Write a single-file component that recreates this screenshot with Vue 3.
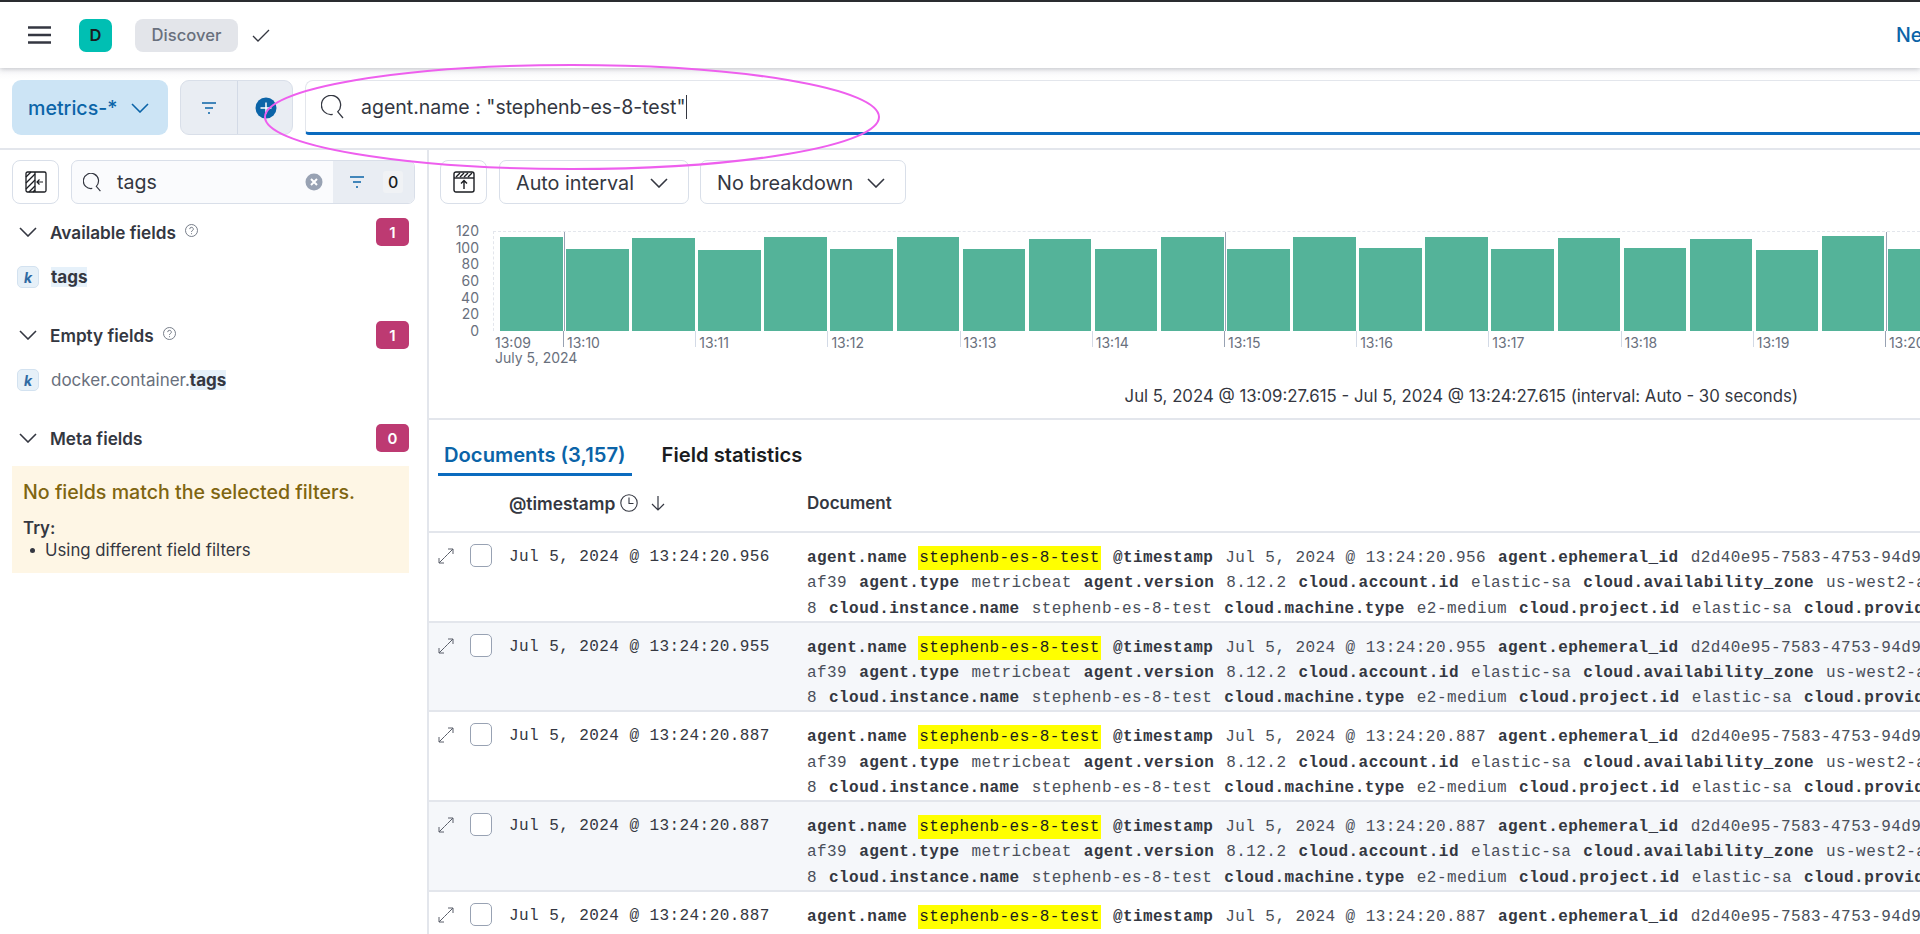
<script setup>
const heights = [94,82,93,81,94,82,94,82,92,82,94,82,94,83,94,82,93,83,92,81,95,82]
const yLabels = ['120','100','80','60','40','20','0']
const ticks = [
  { t: '13:10', major: true }, { t: '13:11' }, { t: '13:12' }, { t: '13:13' }, { t: '13:14' },
  { t: '13:15', major: true }, { t: '13:16' }, { t: '13:17' }, { t: '13:18' }, { t: '13:19' },
  { t: '13:20', major: true }
]
const majors = [70, 731, 1392]
const times = ['956', '955', '887', '887', '887']
const rows = times.map((ms, i) => {
  const ts = `Jul 5, 2024 @ 13:24:20.${ms}`
  return {
    ts,
    alt: i % 2 === 1,
    lines: [
      [['agent.name', 'stephenb-es-8-test', true], ['@timestamp', ts], ['agent.ephemeral_id', 'd2d40e95-7583-4753-94d9']],
      [[null, 'af39'], ['agent.type', 'metricbeat'], ['agent.version', '8.12.2'], ['cloud.account.id', 'elastic-sa'], ['cloud.availability_zone', 'us-west2-a']],
      [[null, '8'], ['cloud.instance.name', 'stephenb-es-8-test'], ['cloud.machine.type', 'e2-medium'], ['cloud.project.id', 'elastic-sa'], ['cloud.provider', 'gcp']]
    ]
  }
})
</script>

<template>
  <div class="page">
    <header class="top">
      <svg class="burger" width="23" height="18" viewBox="0 0 23 18"><path d="M0 1.5h23M0 9h23M0 16.5h23" stroke="#343741" stroke-width="2.6" /></svg>
      <div class="space">D</div>
      <div class="crumb">Discover</div>
      <svg class="check" width="18" height="13" viewBox="0 0 18 13"><path d="M1 7l5 5L17 1" fill="none" stroke="#343741" stroke-width="1.3" /></svg>
      <div class="grow"></div>
      <div class="new">New</div>
    </header>

    <div class="querybar">
      <button class="view">
        <span>metrics-*</span>
        <svg width="18" height="10" viewBox="0 0 18 10"><path d="M1 1l8 8 8-8" fill="none" stroke="#0b64a8" stroke-width="1.6" /></svg>
      </button>
      <div class="fgroup">
        <div class="fcell">
          <svg width="16" height="12" viewBox="0 0 16 12"><path d="M1 1h14M4 6h8M7 11h2" stroke="#0b64a8" stroke-width="1.5" /></svg>
        </div>
        <div class="fcell right">
          <svg width="22" height="22" viewBox="0 0 22 22"><circle cx="11" cy="11" r="10.5" fill="#0b64a8" /><path d="M11 5.5v11M5.5 11h11" stroke="#fff" stroke-width="1.5" /></svg>
        </div>
      </div>
      <div class="query">
        <svg width="24" height="24" viewBox="0 0 24 24"><path d="M11.7 19.45A9.6 9.6 0 1 1 16.8 16.8L22 23" fill="none" stroke="#343741" stroke-width="1.3" /></svg>
        <span class="qtext">agent.name : "stephenb-es-8-test"<i class="caret"></i></span>
      </div>
    </div>

    <div class="body">
      <aside class="side">
        <div class="side-top">
          <button class="iconbtn">
            <svg width="22" height="22" viewBox="0 0 22 22">
              <rect x="1" y="1" width="20" height="20" rx="1.5" fill="none" stroke="#1a1c21" stroke-width="1.3" />
              <path d="M1 6l5-5M1 12L10 3M1 18L10 9M4 21l6-6M8 21l2-2" stroke="#1a1c21" stroke-width="1.3" />
              <path d="M10 1v20" stroke="#1a1c21" stroke-width="1.3" />
              <path d="M18 11h-6M14.5 8.5L12 11l2.5 2.5" fill="none" stroke="#1a1c21" stroke-width="1.2" />
            </svg>
          </button>
          <div class="fsearch">
            <svg class="fsi" width="19" height="19" viewBox="0 0 24 24"><path d="M11.7 19.45A9.6 9.6 0 1 1 16.8 16.8L22 23" fill="none" stroke="#343741" stroke-width="1.5" /></svg>
            <span class="ftext">tags</span>
            <svg class="clear" width="18" height="18" viewBox="0 0 18 18"><circle cx="9" cy="9" r="8.5" fill="#98a2b3" /><path d="M6 6l6 6M12 6l-6 6" stroke="#fff" stroke-width="2" /></svg>
            <div class="fcount">
              <svg width="16" height="12" viewBox="0 0 16 12"><path d="M1 1h14M4 6h8M7 11h2" stroke="#0b64a8" stroke-width="1.5" /></svg>
              <span class="zero">0</span>
            </div>
          </div>
        </div>

        <div class="shead first">
          <svg class="chev" width="18" height="10" viewBox="0 0 18 10"><path d="M1 1l8 8 8-8" fill="none" stroke="#343741" stroke-width="1.6" /></svg>
          <span class="stitle">Available fields</span>
          <svg class="help" width="13" height="13" viewBox="0 0 13 13"><circle cx="6.5" cy="6.5" r="6" fill="none" stroke="#69707d" stroke-width=".9" /><path d="M4.7 5.1a1.8 1.8 0 1 1 2.6 1.6c-.6.3-.8.6-.8 1.3M6.5 9.2v1" fill="none" stroke="#69707d" stroke-width=".9" /></svg>
          <span class="badge">1</span>
        </div>
        <div class="frow">
          <span class="ktype">k</span>
          <span class="fname"><mark class="hl">tags</mark></span>
        </div>

        <div class="shead">
          <svg class="chev" width="18" height="10" viewBox="0 0 18 10"><path d="M1 1l8 8 8-8" fill="none" stroke="#343741" stroke-width="1.6" /></svg>
          <span class="stitle">Empty fields</span>
          <svg class="help" width="13" height="13" viewBox="0 0 13 13"><circle cx="6.5" cy="6.5" r="6" fill="none" stroke="#69707d" stroke-width=".9" /><path d="M4.7 5.1a1.8 1.8 0 1 1 2.6 1.6c-.6.3-.8.6-.8 1.3M6.5 9.2v1" fill="none" stroke="#69707d" stroke-width=".9" /></svg>
          <span class="badge">1</span>
        </div>
        <div class="frow">
          <span class="ktype">k</span>
          <span class="fname muted">docker.container.<mark class="hl">tags</mark></span>
        </div>

        <div class="shead">
          <svg class="chev" width="18" height="10" viewBox="0 0 18 10"><path d="M1 1l8 8 8-8" fill="none" stroke="#343741" stroke-width="1.6" /></svg>
          <span class="stitle">Meta fields</span>
          <span class="badge">0</span>
        </div>

        <div class="callout">
          <div class="ctitle">No fields match the selected filters.</div>
          <div class="ctry">Try:</div>
          <div class="cli"><span class="dot"></span>Using different field filters</div>
        </div>
      </aside>

      <main class="main">
        <div class="chart-top">
          <button class="iconbtn">
            <svg width="22" height="22" viewBox="0 0 22 22">
              <rect x="1" y="1" width="20" height="20" rx="2" fill="none" stroke="#1a1c21" stroke-width="1.4" />
              <path d="M1 7h20" stroke="#1a1c21" stroke-width="1.4" />
              <path d="M3 6l4-4M7 6l4-4M11 6l4-4M15 6l4-4" stroke="#1a1c21" stroke-width="1.4" />
              <path d="M11 18v-8M8 12.5L11 9.5l3 3" fill="none" stroke="#1a1c21" stroke-width="1.4" />
            </svg>
          </button>
          <button class="select s1">Auto interval
            <svg width="18" height="10" viewBox="0 0 18 10"><path d="M1 1l8 8 8-8" fill="none" stroke="#343741" stroke-width="1.6" /></svg>
          </button>
          <button class="select s2">No breakdown
            <svg width="18" height="10" viewBox="0 0 18 10"><path d="M1 1l8 8 8-8" fill="none" stroke="#343741" stroke-width="1.6" /></svg>
          </button>
        </div>

        <div class="chart">
          <div class="ylabels">
            <span v-for="l in yLabels" :key="l">{{ l }}</span>
          </div>
          <div class="plotcol">
            <div class="plot">
              <div v-for="(h, i) in heights" :key="i" class="bar" :style="{ height: h + 'px' }"></div>
              <i v-for="m in majors" :key="m" class="majorline" :style="{ left: m + 'px' }"></i>
            </div>
            <div class="axis">
              <div class="tick first"><span>13:09</span><span>July 5, 2024</span></div>
              <div v-for="t in ticks" :key="t.t" class="tick" :class="{ major: t.major }"><span>{{ t.t }}</span></div>
            </div>
          </div>
        </div>
        <div class="caption">Jul 5, 2024 @ 13:09:27.615 - Jul 5, 2024 @ 13:24:27.615 (interval: Auto - 30 seconds)</div>

        <div class="tabs">
          <div class="tab active">Documents (3,157)</div>
          <div class="tab">Field statistics</div>
        </div>

        <div class="thead">
          <div class="th-ts">@timestamp
            <svg class="clock" width="18" height="18" viewBox="0 0 18 18"><circle cx="9" cy="9" r="8.2" fill="none" stroke="#343741" stroke-width="1.1" /><path d="M9 3.5V9.5h4.5" fill="none" stroke="#343741" stroke-width="1.1" /></svg>
            <svg class="arrow" width="14" height="16" viewBox="0 0 14 16"><path d="M7 1v14M1 9l6 6 6-6" fill="none" stroke="#343741" stroke-width="1.2" /></svg>
          </div>
          <div class="th-doc">Document</div>
        </div>

        <div class="rows">
          <div v-for="(r, i) in rows" :key="i" class="row" :class="{ alt: r.alt }">
            <svg class="expand" width="16" height="16" viewBox="0 0 16 16"><path d="M10 1h5v5M15 1L9.5 6.5M6.5 9.5L1 15M1 10v5h5" fill="none" stroke="#5a5f6a" stroke-width="1" /><path d="M9.5 6.5l-3 3" stroke="#5a5f6a" stroke-width="1" /></svg>
            <span class="cb"></span>
            <div class="ts">{{ r.ts }}</div>
            <div class="doc">
              <div v-for="(ln, j) in r.lines" :key="j" class="ln">
                <template v-for="(p, k) in ln" :key="k">
                  <b v-if="p[0]">{{ p[0] }}</b>
                  <span :class="{ yel: p[2] }">{{ p[1] }}</span>
                </template>
              </div>
            </div>
          </div>
        </div>
      </main>
    </div>

    <svg class="annot" width="640" height="120" viewBox="0 0 640 120"><ellipse cx="320" cy="60" rx="307" ry="52" fill="none" stroke="#ee5fee" stroke-width="2" /></svg>
  </div>
</template>

<style>
html, body { margin: 0; background: #fff; overflow: hidden; }
</style>

<style scoped>
* { box-sizing: border-box; }
button { font-family: inherit; background: none; margin: 0; cursor: pointer; }
.page {
  position: relative;
  width: 1920px;
  height: 934px;
  overflow: hidden;
  display: flex;
  flex-direction: column;
  font-family: Inter, "Liberation Sans", sans-serif;
  color: #343741;
}
.top {
  height: 68px;
  flex: none;
  display: flex;
  align-items: center;
  background: #fff;
  border-top: 2px solid #2a2c30;
  box-shadow: 0 1px 5px rgba(60, 66, 80, .3);
  position: relative;
  z-index: 2;
  padding-left: 28px;
}
.burger { margin-right: 28px; }
.space {
  width: 33px; height: 33px; border-radius: 7px; background: #00bfb3;
  display: flex; align-items: center; justify-content: center;
  font-size: 16.5px; font-weight: 600; color: #1a1c21; margin-right: 23px;
}
.crumb {
  width: 103px; height: 33px; border-radius: 8px; background: #e3e5ea;
  color: #69707d; font-size: 16.6px; font-weight: 500;
  display: flex; align-items: center; justify-content: center; margin-right: 14px;
}
.grow { flex: 1; }
.new { color: #0b64a8; font-size: 19.6px; font-weight: 500; width: 24px; white-space: nowrap; overflow: visible; }
.querybar {
  height: 82px; flex: none; display: flex; align-items: flex-start;
  padding: 12px 0 0 12px; border-bottom: 2px solid #e3e6ec; background: linear-gradient(#f8f8fa, #fff 12px);
}
.view {
  width: 156px; height: 55px; border: 0; border-radius: 9px; background: #cce4f5;
  color: #0b64a8; font-size: 19.6px; font-weight: 500;
  display: flex; align-items: center; gap: 14px; padding-left: 16px;
}
.fgroup {
  width: 113px; height: 55px; margin-left: 12px; display: flex;
  background: #e9edf3; border: 1px solid #d9dfe9; border-radius: 9px;
}
.fcell { flex: 0 0 56px; display: flex; align-items: center; justify-content: center; }
.fcell.right { border-left: 1px solid #d3dae6; }
.query {
  flex: 1; height: 55px; margin-left: 12px; background: #fff; display: flex; align-items: center;
  border: 1px solid #e3e6ec; border-right: 0; border-bottom: 3px solid #0b6bbf; border-radius: 8px 0 0 4px;
  padding-left: 15px;
}
.qtext { margin-left: 16px; font-size: 19.5px; color: #343741; position: relative; display: inline-flex; align-items: center; }
.caret { width: 1px; height: 24px; background: #343741; margin-left: 1px; }
.body { flex: 1; display: flex; min-height: 0; }
.side { width: 429px; flex: none; border-right: 2px solid #e3e6ec; padding: 10px 0 0 12px; }
.side-top { display: flex; gap: 12px; width: 403px; }
.iconbtn {
  width: 47px; height: 44px; border: 1px solid #d9dfe9; border-radius: 8px; background: #fff;
  display: flex; align-items: center; justify-content: center; padding: 0; flex: none;
}
.fsearch {
  flex: 1; height: 44px; background: #fafbfd; border: 1px solid #d9dfe9; border-radius: 7px;
  display: flex; align-items: center; padding-left: 11px; overflow: hidden;
}
.ftext { font-size: 19.6px; margin-left: 15px; flex: 1; }
.clear { margin-right: 10px; }
.fcount {
  width: 81px; height: 100%; background: #e9edf3; display: flex; align-items: center;
  padding-left: 16px; gap: 18px;
}
.zero { background: #f0f2f5; font-size: 16px; font-weight: 500; color: #1a1c21; padding: 1px 5px; border-radius: 3px; }
.shead { width: 397px; height: 28px; display: flex; align-items: center; margin-top: 33px; padding-left: 7px; }
.shead.first { margin-top: 14px; }
.chev { margin-right: 13px; flex: none; }
.stitle { font-size: 17.2px; font-weight: 600; color: #343741; }
.help { margin-left: 9px; margin-top: -3px; }
.badge {
  margin-left: auto; width: 33px; height: 28px; background: #bd3a72; color: #fff; border-radius: 5px;
  display: flex; align-items: center; justify-content: center; font-size: 15px; font-weight: 600;
}
.frow { display: flex; align-items: center; height: 22px; margin-top: 20px; padding-left: 5px; }
.ktype {
  width: 22px; height: 22px; border-radius: 5px; background: #e6f0f8; border: 1px solid #d3e2f0;
  color: #2f6aa3; font-style: italic; font-weight: 700; font-size: 14px;
  display: flex; align-items: center; justify-content: center; margin-right: 12px; flex: none;
}
.fname { font-size: 17px; color: #343741; }
.fname.muted { color: #69707d; }
.hl { background: #e6f1fa; color: #343741; font-weight: 700; }
.callout {
  width: 397px; height: 107px; margin-top: 14px; background: #fef6e5; padding: 14px 11px 0;
}
.ctitle { font-size: 19.6px; font-weight: 500; color: #7f6510; line-height: 24px; white-space: nowrap; }
.ctry { font-size: 16.8px; font-weight: 600; color: #343741; margin-top: 14px; line-height: 20px; }
.cli { font-size: 16.8px; color: #343741; line-height: 22px; margin-top: 1px; padding-left: 7px; display: flex; align-items: center; }
.dot { width: 5px; height: 5px; border-radius: 50%; background: #343741; margin-right: 10px; }
.main { flex: 1; min-width: 0; display: flex; flex-direction: column; }
.chart-top { display: flex; flex: none; gap: 12px; padding: 10px 0 0 11px; }
.select {
  height: 44px; border: 1px solid #d9dfe9; border-radius: 7px; background: #fff; color: #343741;
  font-size: 19.8px; display: flex; align-items: center; justify-content: space-between; padding: 2px 20px 0 16px;
}
.s1 { width: 190px; }
.s2 { width: 206px; margin-left: -1px; }
.chart { display: flex; flex: none; margin-top: 19px; height: 160px; }
.ylabels {
  width: 50px; height: 117px; flex: none; display: flex; flex-direction: column; align-items: flex-end;
  font-size: 14px; color: #69707d;
}
.ylabels span { height: 16.7px; line-height: 16.7px; }
.plotcol { margin-left: 14px; margin-top: 8px; flex: 1; min-width: 0; }
.plot {
  position: relative; height: 100px; display: flex; align-items: flex-end; gap: 3.5px; padding-left: 6px;
  border-top: 1px dashed #e3e6ec; border-left: 1px dashed #e3e6ec;
}
.bar { width: 62.6px; flex: none; background: #54b399; }
.majorline { position: absolute; top: 0; bottom: 0; width: 1px; background: #98a2b3; }
.axis { display: flex; height: 16px; }
.tick {
  flex: 0 0 132.2px; min-width: 0; height: 16px; border-left: 1px solid #d3dae6; padding: 4px 0 0 3px;
  font-size: 14px; line-height: 16px; color: #69707d; white-space: nowrap;
}
.tick.major { border-left-color: #98a2b3; }
.tick.first { flex: 0 0 70px; border-left: 0; display: flex; flex-direction: column; padding: 4px 0 0 2px; line-height: 15px; }
.caption { flex: none; text-align: right; padding: 3px 122px 0 0; font-size: 16.8px; line-height: 20px; color: #343741; height: 35px; }
.tabs { height: 58px; flex: none; border-top: 2px solid #e3e6ec; display: flex; gap: 24px; padding: 0 0 0 9px; }
.tab { font-size: 20.2px; font-weight: 600; color: #1a1c21; padding: 22px 6px 0; height: 56px; white-space: nowrap; }
.tab.active { color: #0b64a8; border-bottom: 3px solid #0b6bbf; }
.thead { height: 58px; flex: none; display: flex; align-items: center; border-bottom: 2px solid #e3e6ec; padding: 0 0 0 80px; margin-top: -1px; }
.th-ts { width: 298px; font-size: 17.4px; font-weight: 600; display: flex; align-items: center; flex: none; }
.clock { margin-left: 5px; }
.arrow { margin-left: 13px; }
.th-doc { font-size: 17px; font-weight: 600; }
.rows { flex: none; }
.row {
  height: 89.7px; display: flex; align-items: flex-start; border-bottom: 2px solid #e3e6ec;
  font-family: "Liberation Mono", monospace; font-size: 16px; letter-spacing: .43px; position: relative;
  padding-left: 80px; background: #fff; color: #4a4f5a;
}
.row.alt { background: #f5f7fa; }
.expand { position: absolute; left: 9px; top: 15px; }
.cb { position: absolute; left: 41px; top: 11px; width: 22px; height: 23px; border-radius: 5px; border: 1.5px solid #98a2b3; background: #fff; }
.ts { width: 298px; flex: none; line-height: 24px; padding-top: 12px; color: #343741; }
.doc { padding-top: 13px; white-space: nowrap; }
.ln { height: 25.3px; line-height: 25.3px; }
.ln b, .ln span { margin-right: 12px; }
.ln b { color: #343741; font-weight: 700; }
.yel { background: #ffff00; color: #1a1c21; padding: 3px 1px; margin-left: -1px; }
.annot { position: absolute; left: 252px; top: 57px; z-index: 5; pointer-events: none; }
</style>
